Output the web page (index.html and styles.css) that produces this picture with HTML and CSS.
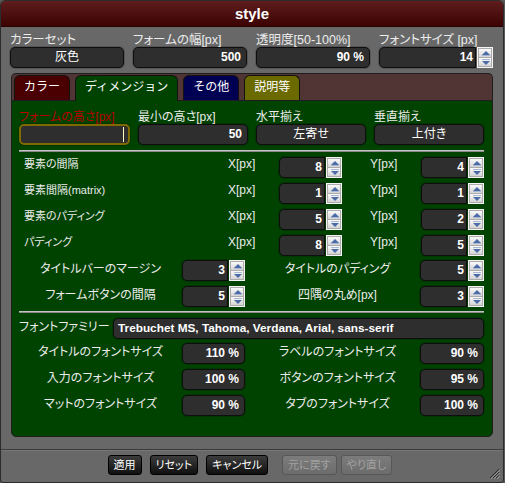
FILE: index.html
```html
<!DOCTYPE html>
<html lang="ja">
<head>
<meta charset="utf-8">
<title>style</title>
<link rel="stylesheet" href="styles.css">
</head>
<body>
<div class="window">
  <div class="titlebar">style</div>
  <div class="body">
    <div class="top-fields">
      <div class="fld"><div class="lbl">カラーセット</div><div class="box center">灰色</div></div>
      <div class="fld"><div class="lbl">フォームの幅[px]</div><div class="box num">500</div></div>
      <div class="fld"><div class="lbl">透明度[50-100%]</div><div class="box num">90 %</div></div>
      <div class="fld"><div class="lbl">フォントサイズ [px]</div>
        <div class="spin"><div class="box num">14</div>
          <div class="arrows"><span class="arr up"></span><span class="arr down"></span></div></div>
      </div>
    </div>

    <div class="tabs">
      <div class="tab t-red">カラー</div>
      <div class="tab t-green active">ディメンジョン</div>
      <div class="tab t-navy">その他</div>
      <div class="tab t-olive">説明等</div>
    </div>

    <div class="panel">
      <div class="row1">
        <div class="fld"><div class="lbl2 warn">フォームの高さ[px]</div><div class="box focus"><span class="caret"></span></div></div>
        <div class="fld"><div class="lbl2">最小の高さ[px]</div><div class="box num">50</div></div>
        <div class="fld"><div class="lbl2">水平揃え</div><div class="box center btnlike">左寄せ</div></div>
        <div class="fld"><div class="lbl2">垂直揃え</div><div class="box center btnlike">上付き</div></div>
      </div>
      <div class="sep"></div>

      <div class="xy-grid">
        <div class="rlbl">要素の間隔</div><div class="xy">X[px]</div>
        <div class="spin"><div class="box num">8</div><div class="arrows"><span class="arr up"></span><span class="arr down"></span></div></div>
        <div class="xy ylbl">Y[px]</div>
        <div class="spin"><div class="box num">4</div><div class="arrows"><span class="arr up"></span><span class="arr down"></span></div></div>

        <div class="rlbl">要素間隔(matrix)</div><div class="xy">X[px]</div>
        <div class="spin"><div class="box num">1</div><div class="arrows"><span class="arr up"></span><span class="arr down"></span></div></div>
        <div class="xy ylbl">Y[px]</div>
        <div class="spin"><div class="box num">1</div><div class="arrows"><span class="arr up"></span><span class="arr down"></span></div></div>

        <div class="rlbl">要素のパディング</div><div class="xy">X[px]</div>
        <div class="spin"><div class="box num">5</div><div class="arrows"><span class="arr up"></span><span class="arr down"></span></div></div>
        <div class="xy ylbl">Y[px]</div>
        <div class="spin"><div class="box num">2</div><div class="arrows"><span class="arr up"></span><span class="arr down"></span></div></div>

        <div class="rlbl">パディング</div><div class="xy">X[px]</div>
        <div class="spin"><div class="box num">8</div><div class="arrows"><span class="arr up"></span><span class="arr down"></span></div></div>
        <div class="xy ylbl">Y[px]</div>
        <div class="spin"><div class="box num">5</div><div class="arrows"><span class="arr up"></span><span class="arr down"></span></div></div>
      </div>

      <div class="pair-grid g1">
        <div class="plbl">タイトルバーのマージン</div>
        <div class="spin"><div class="box num">3</div><div class="arrows"><span class="arr up"></span><span class="arr down"></span></div></div>
        <div></div>
        <div class="plbl">タイトルのパディング</div>
        <div class="spin"><div class="box num">5</div><div class="arrows"><span class="arr up"></span><span class="arr down"></span></div></div>

        <div class="plbl">フォームボタンの間隔</div>
        <div class="spin"><div class="box num">5</div><div class="arrows"><span class="arr up"></span><span class="arr down"></span></div></div>
        <div></div>
        <div class="plbl">四隅の丸め[px]</div>
        <div class="spin"><div class="box num">3</div><div class="arrows"><span class="arr up"></span><span class="arr down"></span></div></div>
      </div>
      <div class="sep sep2"></div>

      <div class="font-row">
        <div class="flbl">フォントファミリー</div>
        <div class="box ff">Trebuchet MS, Tahoma, Verdana, Arial, sans-serif</div>
      </div>

      <div class="pair-grid g2">
        <div class="plbl">タイトルのフォントサイズ</div><div class="box num">110 %</div><div></div>
        <div class="plbl">ラベルのフォントサイズ</div><div class="box num">90 %</div>
        <div class="plbl">入力のフォントサイズ</div><div class="box num">100 %</div><div></div>
        <div class="plbl">ボタンのフォントサイズ</div><div class="box num">95 %</div>
        <div class="plbl">マットのフォントサイズ</div><div class="box num">90 %</div><div></div>
        <div class="plbl">タブのフォントサイズ</div><div class="box num">100 %</div>
      </div>
    </div>
  </div>

  <div class="footer">
    <button class="btn">適用</button>
    <button class="btn">リセット</button>
    <button class="btn">キャンセル</button>
    <button class="btn dis gapl">元に戻す</button>
    <button class="btn dis">やり直し</button>
  </div>
  <svg class="grip" width="12" height="12" viewBox="0 0 12 12">
    <path d="M11 2 L2 11 M11 5 L5 11 M11 8 L8 11" stroke="#2a2a2a" stroke-width="1"/>
    <path d="M12 3 L3 12 M12 6 L6 12 M12 9 L9 12" stroke="#9a9a9a" stroke-width="1"/>
  </svg>
</div>
</body>
</html>
```

FILE: styles.css
```css
html, body {
  margin: 0;
  padding: 0;
  background: #5a5a5a;
}
body {
  font-family: "Liberation Sans", "Noto Sans CJK JP", sans-serif;
  font-feature-settings: "palt";
  color: #ececec;
}
.window {
  position: relative;
  width: 504px;
  height: 483px;
  box-sizing: border-box;
  border: 1px solid #2c2c2c;
  border-radius: 5px 5px 3px 3px;
  background: #686868;
  display: flex;
  flex-direction: column;
  overflow: hidden;
}
.titlebar {
  height: 26px;
  flex: none;
  background: linear-gradient(#5e1d1d, #3c0303);
  border-radius: 4px 4px 0 0;
  border-bottom: 1px solid #2a0000;
  box-sizing: border-box;
  color: #fff;
  font-weight: bold;
  font-size: 15px;
  line-height: 25px;
  text-align: center;
}
.body {
  flex: 1;
  padding: 6px 10px 0 9px;
}
.top-fields {
  display: grid;
  grid-template-columns: repeat(4, 114px);
  column-gap: 9px;
}
.lbl {
  font-size: 12.5px;
  line-height: 14px;
  height: 14px;
  white-space: nowrap;
}
.box {
  height: 21px;
  box-sizing: border-box;
  background: #2e2e2e;
  border: 1px solid #0e0e0e;
  border-radius: 5px;
  box-shadow: 0 0 0 1px rgba(0,0,0,0.18);
  color: #fff;
  font-size: 12px;
  line-height: 19px;
  padding: 0 5px;
  white-space: nowrap;
  overflow: hidden;
}
.num {
  text-align: right;
  font-weight: bold;
}
.center {
  text-align: center;
}
.spin {
  display: flex;
  gap: 1px;
  height: 21px;
}
.spin .box {
  flex: 1;
  min-width: 0;
  border-radius: 5px 0 0 5px;
  padding-right: 2px;
}
.arrows {
  width: 16px;
  flex: none;
  box-sizing: border-box;
  border: 1px solid #f4f4f4;
  background: #e6e6e6;
  display: flex;
  flex-direction: column;
}
.arr {
  flex: 1;
  position: relative;
  background: linear-gradient(#fafafa, #d4d4d4);
  border: 1px solid #ababab;
}
.arr + .arr {
  border-top: 0;
}
.arr::before {
  content: "";
  position: absolute;
  left: 3px;
  width: 0;
  height: 0;
  border-left: 4px solid transparent;
  border-right: 4px solid transparent;
}
.arr::after {
  content: "";
  position: absolute;
  left: 3px;
  width: 8px;
  height: 1px;
  background: #a8b8d2;
}
.up::before { top: 2px; border-bottom: 4px solid #4a6aa8; }
.up::after { top: 6px; }
.down::before { top: 3px; border-top: 4px solid #4a6aa8; }
.down::after { top: 1px; }

.tabs {
  margin-top: 5px;
  margin-left: 1px;
  height: 27px;
  box-sizing: border-box;
  background: #513434;
  border: 1px solid #1e1e1e;
  border-bottom: 0;
  border-radius: 5px 5px 0 0;
  padding: 1px 2px 0;
  display: flex;
  align-items: flex-end;
  gap: 5px;
}
.tab {
  height: 25px;
  box-sizing: border-box;
  border: 1px solid #121212;
  border-bottom: 0;
  border-radius: 6px 6px 0 0;
  padding: 0 9px;
  font-size: 12px;
  font-feature-settings: normal;
  line-height: 23px;
  color: #fff;
  white-space: nowrap;
}
.t-red { background: #4a0000; }
.t-green { background: #004200; }
.t-navy { background: #000052; }
.t-olive { background: #6a6a00; }
.tab.active {
  position: relative;
  z-index: 1;
  height: 26px;
  margin-bottom: -1px;
}
.panel {
  margin-left: 1px;
  height: 337px;
  box-sizing: border-box;
  background: #004200;
  border: 1px solid #1e1e1e;
  border-radius: 0 0 5px 5px;
  padding: 9px 8px 0 7px;
}
.row1 {
  display: grid;
  grid-template-columns: 111px 110px 110px 110px;
  column-gap: 8px;
}
.lbl2 {
  font-size: 12px;
  line-height: 14px;
  height: 14px;
  white-space: nowrap;
}
.warn { color: #b80000; }
.box.focus {
  border: 2px solid #7e6a00;
  display: flex;
  justify-content: flex-end;
  align-items: center;
  padding-right: 4px;
}
.caret {
  width: 1px;
  height: 15px;
  background: #fff8c0;
}
.btnlike {
  font-weight: normal;
}
.sep {
  margin-top: 5px;
  height: 0;
  border-top: 1px solid #c4c4c4;
  border-bottom: 1px solid #8a8a8a;
}
.sep2 { margin-top: 4px; }

.xy-grid {
  margin-top: 5px;
  display: grid;
  grid-template-columns: 209px 51px 63px 79px 63px;
  grid-auto-rows: 21px;
  row-gap: 5px;
}
.rlbl, .xy {
  font-size: 11px;
  line-height: 14px;
  white-space: nowrap;
}
.rlbl { padding-left: 5px; }
.xy { font-size: 12px; }
.ylbl { padding-left: 28px; }

.pair-grid {
  display: grid;
  grid-template-columns: 163px 63px 10px 165px 64px;
  grid-auto-rows: 21px;
  row-gap: 5px;
  margin-top: 4px;
}
.plbl {
  font-size: 12px;
  line-height: 19px;
  text-align: center;
  white-space: nowrap;
}
.font-row {
  margin-top: 5px;
  display: flex;
  height: 21px;
}
.flbl {
  width: 94px;
  flex: none;
  font-size: 12px;
  line-height: 19px;
  white-space: nowrap;
  overflow: hidden;
}
.box.ff {
  flex: 1;
  font-weight: bold;
  font-size: 11.8px;
  padding-left: 4px;
}
.footer {
  height: 33px;
  flex: none;
  box-sizing: border-box;
  border-top: 1px solid #3a3a3a;
  box-shadow: inset 0 1px 0 #777;
  padding: 5px 4px 0 0;
  display: flex;
  justify-content: center;
  align-items: flex-start;
  gap: 8px;
}
.btn {
  height: 20px;
  margin: 0;
  padding: 0 5px;
  font-family: inherit;
  font-feature-settings: "palt";
  font-size: 11px;
  line-height: 18px;
  color: #fff;
  background: linear-gradient(#3c3c3c, #101010);
  border: 1px solid #000;
  border-radius: 3px;
}
.btn.dis {
  color: #a2a2a2;
  background: linear-gradient(#7c7c7c, #6c6c6c);
  border-color: #575757;
}
.btn.gapl { margin-left: 6px; }
.btn.dis + .btn.dis { margin-left: -4px; }
.grip {
  position: absolute;
  right: 3px;
  bottom: 3px;
}
```
